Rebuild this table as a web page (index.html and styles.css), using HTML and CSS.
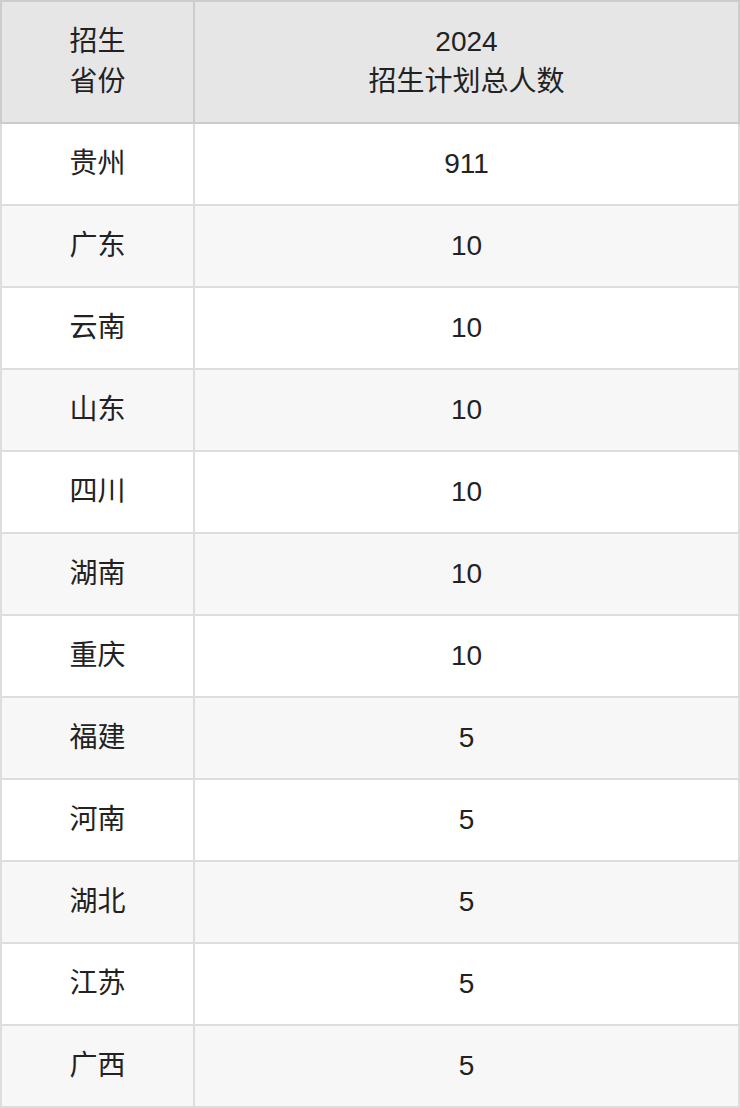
FILE: index.html
```html
<!DOCTYPE html>
<html lang="zh">
<head>
<meta charset="utf-8">
<link rel="stylesheet" href="styles.css">
</head>
<body>
<table class="plan">
  <colgroup><col class="c1"><col class="c2"></colgroup>
  <thead>
    <tr><th>招生<br>省份</th><th>2024<br>招生计划总人数</th></tr>
  </thead>
  <tbody>
    <tr><td>贵州</td><td>911</td></tr>
    <tr><td>广东</td><td>10</td></tr>
    <tr><td>云南</td><td>10</td></tr>
    <tr><td>山东</td><td>10</td></tr>
    <tr><td>四川</td><td>10</td></tr>
    <tr><td>湖南</td><td>10</td></tr>
    <tr><td>重庆</td><td>10</td></tr>
    <tr><td>福建</td><td>5</td></tr>
    <tr><td>河南</td><td>5</td></tr>
    <tr><td>湖北</td><td>5</td></tr>
    <tr><td>江苏</td><td>5</td></tr>
    <tr><td>广西</td><td>5</td></tr>
  </tbody>
</table>
</body>
</html>
```
FILE: styles.css
```css
html, body { margin: 0; padding: 0; background: #fff; }
.plan {
  width: 740px;
  table-layout: fixed;
  border-collapse: collapse;
  font-family: "Liberation Sans", "Noto Sans CJK SC", sans-serif;
  font-size: 28px;
  color: #222;
}
.c1 { width: 193px; }
.plan th, .plan td {
  text-align: center;
  vertical-align: middle;
  padding: 20px 0;
  line-height: 40px;
  border: 2px solid #dddddd;
  font-weight: normal;
}
.plan th {
  background: #e6e6e6;
  border-color: #cccccc;
}
.plan tbody tr:nth-child(even) td { background: #f7f7f7; }
.plan tbody tr:first-child td { border-top-color: #cccccc; }
```
